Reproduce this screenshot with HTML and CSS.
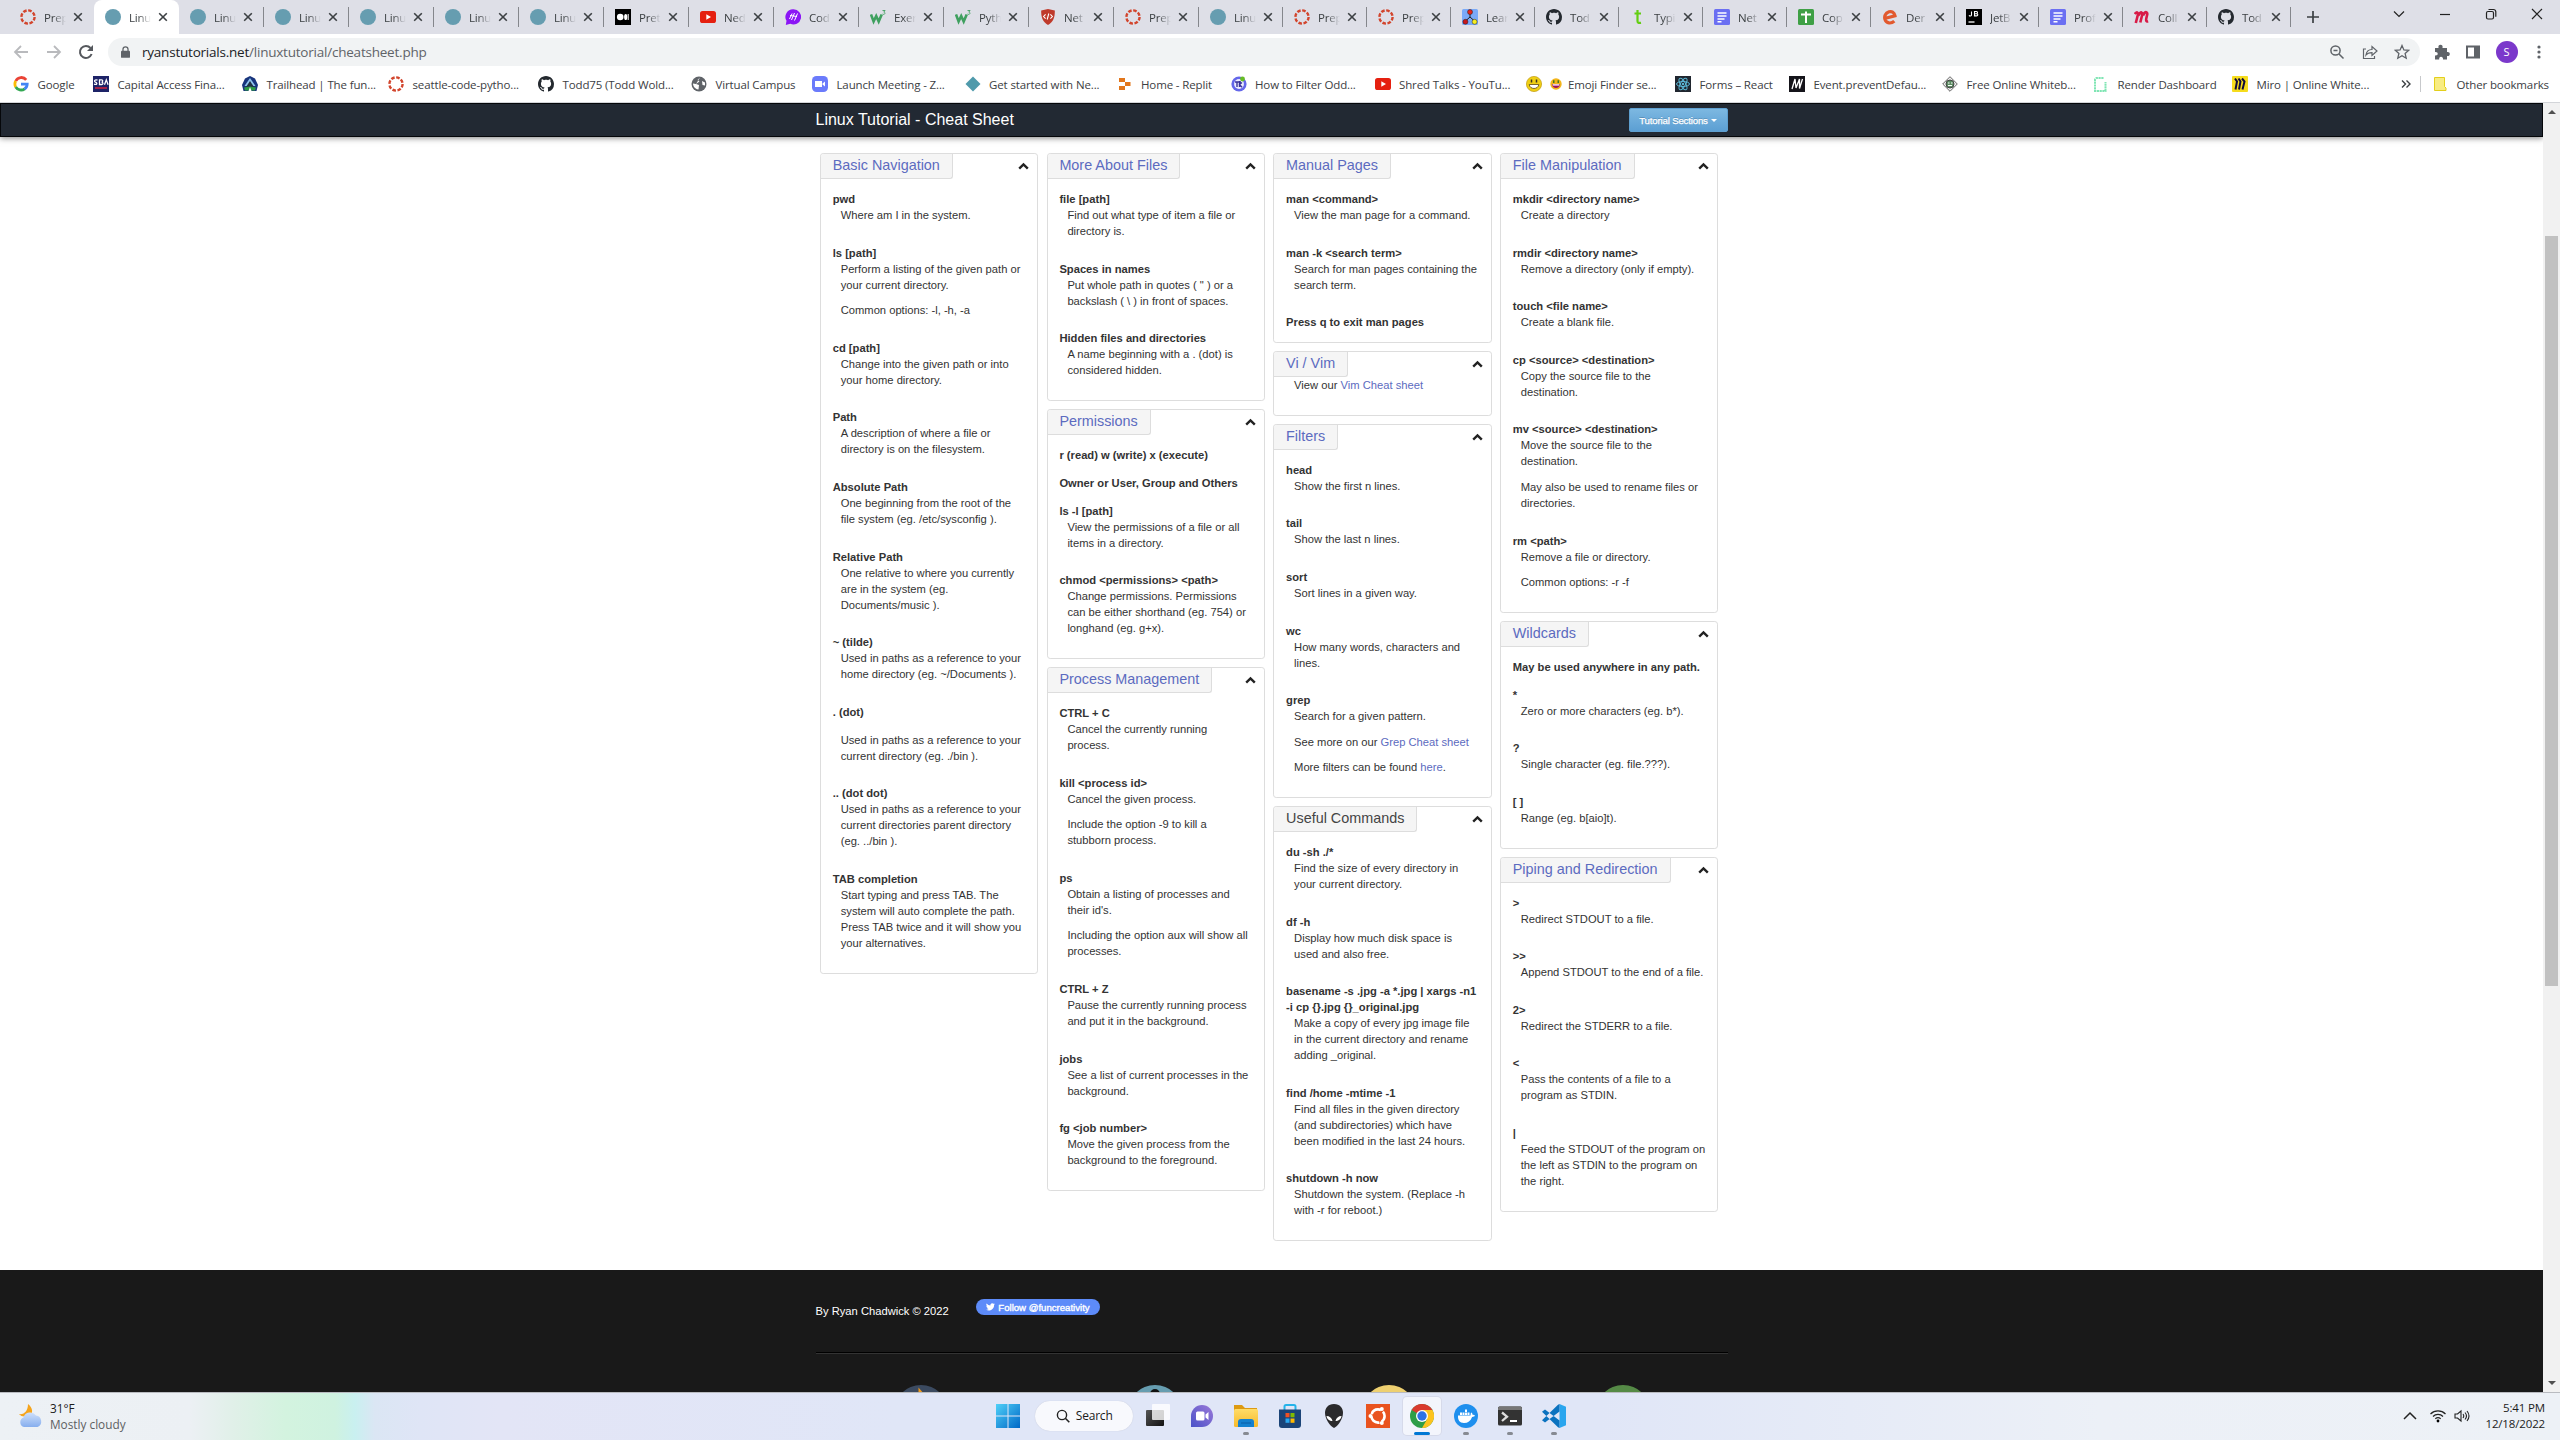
FILE: index.html
```html
<!DOCTYPE html>
<html lang="en">
<head>
<meta charset="utf-8">
<title>Linux Tutorial - Cheat Sheet</title>
<link rel="stylesheet" href="styles.css">
</head>
<body>
<svg class="defs" aria-hidden="true">
  <defs>
    <linearGradient id="g-win" x1="0" y1="0" x2="1" y2="1"><stop offset="0" stop-color="#4fd0f8"/><stop offset="1" stop-color="#0067c6"/></linearGradient>
    <linearGradient id="g-chat" x1="0" y1="1" x2="1" y2="0"><stop offset="0" stop-color="#4a52c8"/><stop offset="1" stop-color="#9a78d8"/></linearGradient>
    <linearGradient id="g-fold" x1="0" y1="0" x2="0" y2="1"><stop offset="0" stop-color="#ffdc68"/><stop offset="1" stop-color="#f7b92a"/></linearGradient>
    <linearGradient id="g-cloud" x1="0" y1="0" x2="0" y2="1"><stop offset="0" stop-color="#cfe0fb"/><stop offset="1" stop-color="#86aeee"/></linearGradient>
    <linearGradient id="g-dark" x1="0" y1="0" x2="1" y2="1"><stop offset="0" stop-color="#555"/><stop offset="1" stop-color="#111"/></linearGradient>
  </defs>
  <symbol id="canvas" viewBox="0 0 16 16"><circle cx="8" cy="8" r="6.6" fill="none" stroke="#d2452d" stroke-width="2.4" stroke-dasharray="3.6 1.58"/></symbol>
  <symbol id="dot" viewBox="0 0 16 16"><circle cx="8" cy="8" r="8" fill="#669db0"/></symbol>
  <symbol id="medium" viewBox="0 0 16 16"><path d="M0 0h16v16H0z"/><circle cx="5.2" cy="8" r="3.3" fill="#fff"/><ellipse cx="10.7" cy="8" rx="1.6" ry="3.1" fill="#fff"/><path d="M13.2 5v6" stroke="#fff"/></symbol>
  <symbol id="yt" viewBox="0 0 16 16"><rect y="2" width="16" height="12" rx="2.6" fill="#e52010"/><path d="M6.3 5.3v5.4L11 8z" fill="#fff"/></symbol>
  <symbol id="code" viewBox="0 0 16 16"><path d="M8.5.3a7.6 7.6 0 1 1-3.2 14.500L.8 16l.7-4.200A7.600 7.600 0 0 1 8.500.3z" fill="#8b15f5"/><path d="M4.500 10l2.600-5.500M6.500 11l3-7M9.500 11.500l3-7M5 6.500l7 1" stroke="#fff" fill="none"/></symbol>
  <symbol id="w3" viewBox="0 0 16 16"><path d="M1 5.500l2.600 7L6.200 7l2.500 5.500 3-7" fill="none" stroke="#3fa05f" stroke-width="2.600"/><path d="M12.500 1.500h2.600l-1.300 1.600c1.500 0 1.500 2.300-.1 2.300l-1.200-.3" fill="none" stroke="#3fa05f" stroke-width=".9"/></symbol>
  <symbol id="shield" viewBox="0 0 16 16"><path d="M8 0l6.800 1.600C15 8 13.500 13 8 16 2.500 13 1 8 1.200 1.600z" fill="#bf3a2b"/><path d="M5.600 5.300L3.600 7.500l2 2.200M10.400 5.300l2 2.200-2 2.200M8.800 4.500l-1.600 6" stroke="#fff" fill="none" stroke-width="1.100"/></symbol>
  <symbol id="lea" viewBox="0 0 16 16"><rect width="16" height="16" rx="1.500" fill="#7aaaf8"/><path d="M8 4v4M3.500 12L8 8l4.500 4" stroke="#222" fill="none"/><circle cx="8" cy="3" r="2.500" fill="#e8251c" stroke="#222" stroke-width=".5"/><circle cx="3.400" cy="12.800" r="2.500" fill="#c8181c" stroke="#222" stroke-width=".5"/><circle cx="12.600" cy="12.800" r="2.500" fill="#f6ee20" stroke="#222" stroke-width=".5"/></symbol>
  <symbol id="github" viewBox="0 0 16 16"><path fill="#24292f" d="M8 0C3.580 0 0 3.580 0 8c0 3.540 2.290 6.530 5.470 7.590.4.070.55-.17.55-.38 0-.19-.01-.82-.01-1.490-2.010.37-2.530-.49-2.690-.94-.09-.23-.48-.94-.82-1.130-.28-.15-.68-.52-.01-.53.63-.01 1.080.58 1.230.82.72 1.210 1.870.87 2.330.66.07-.52.28-.87.51-1.070-1.780-.2-3.640-.89-3.640-3.950 0-.87.31-1.590.82-2.150-.08-.2-.36-1.020.08-2.120 0 0 .67-.21 2.200.82.64-.18 1.320-.27 2-.27s1.360.09 2 .27c1.530-1.040 2.200-.82 2.200-.82.44 1.100.16 1.920.08 2.120.51.56.82 1.270.82 2.150 0 3.070-1.870 3.750-3.650 3.950.29.25.54.73.54 1.480 0 1.070-.01 1.930-.01 2.200 0 .21.15.46.55.38A8.010 8.010 0 0 0 16 8c0-4.420-3.580-8-8-8z"/></symbol>
  <symbol id="tee" viewBox="0 0 16 16"><path d="M7.500 1v11c0 2 1 2.200 3.500 1.800M4.500 4.500h6.500" stroke="#63ce12" stroke-width="2.200" fill="none"/></symbol>
  <symbol id="docs" viewBox="0 0 16 16"><rect width="16" height="16" rx="1.500" fill="#6b6ff2"/><path d="M3.500 4h9M3.500 7h9M3.500 10h7M3.500 12.800h4" stroke="#fff" stroke-width="1.500"/></symbol>
  <symbol id="sheet" viewBox="0 0 16 16"><rect width="16" height="16" rx="1.500" fill="#3fa046"/><path d="M3 5.500h10M8 2.500v11.500" stroke="#fff" stroke-width="2"/></symbol>
  <symbol id="ee" viewBox="0 0 16 16"><path d="M3.500 9.300l9.500-2.400C12.300 3 9.500 2 7 2.800 3.300 4 2 7.600 3 10.600c1.300 4 6.200 4.400 9.300 1.500" fill="none" stroke="#e2592e" stroke-width="3.200"/></symbol>
  <symbol id="jb" viewBox="0 0 16 16"><path d="M0 0h16v16H0z"/><path d="M5.500 2.500v3.600c0 1.200-1.800 1.200-2.500.3M8.500 2.500v4.400h2c1.800 0 1.600-2.100.2-2.200H8.500h2c1.300 0 1.300-2.200 0-2.200z" fill="none" stroke="#fff" stroke-width="1.100"/><path d="M2.500 13h6" stroke="#fff" stroke-width="1.300"/></symbol>
  <symbol id="mm" viewBox="0 0 16 16"><path d="M.8 5C3 2 4.700 3.500 3.300 8l-1.500 6M4.200 6.500C7 1.500 9 3 7.900 7l-1.600 6.500M9 6.500c2.500-5.500 5-3.500 4 0-.9 3.500-1.800 6.500 1.200 6" fill="none" stroke="#d81b47" stroke-width="2.600"/></symbol>
  <symbol id="google" viewBox="0 0 16 16"><path d="M13.200 3.800A6.200 6.200 0 0 0 2.800 5" fill="none" stroke="#ea4335" stroke-width="2.800"/><path d="M2.700 5a6.300 6.300 0 0 0 0 6" fill="none" stroke="#fbbc05" stroke-width="2.800"/><path d="M2.700 11a6.200 6.200 0 0 0 9 1.800" fill="none" stroke="#34a853" stroke-width="2.800"/><path d="M11.500 13A6 6 0 0 0 14.200 8.200H8" fill="none" stroke="#4285f4" stroke-width="2.800"/></symbol>
  <symbol id="sba" viewBox="0 0 16 16"><path d="M0 0h16v16H0z" fill="#1d2367"/><path d="M4.500 4.200C2 3 .5 5.300 2.500 6.200c2.300.8 1.500 3-1.500 1.900M6.500 3.800v4.700h2c2 0 1.800-2.300 0-2.300 1.500 0 1.700-2.400 0-2.400zM11.500 8.800l1.800-5 1.800 5" fill="none" stroke="#fff" stroke-width="1.300"/><path d="M2 12h12" stroke="#d3253c" stroke-width="1.500"/></symbol>
  <symbol id="trail" viewBox="0 0 16 16"><path d="M8 0l5 2.500 3 6.500-1.500 6h-13L0 9l3-6.500z" fill="#18347c"/><path d="M8 2l5.500 8h-11z" fill="#8fc4ee"/><path d="M8 5l4 6H4z" fill="#234"/><path d="M2 11.500l6-1 6 1-1 3H3z" fill="#2f9b43"/><path d="M8 11l1.500 4h-3z" fill="#fff"/></symbol>
  <symbol id="globe" viewBox="0 0 16 16"><circle cx="8" cy="8" r="7.500" fill="#5f6368"/><path d="M9 1.500L6.500 4l2 1.500L5 8l3 1-.500 4.500C3 13 2 9 2 7.500l3 .500M11 5l3 1.500v3L11.500 9z" fill="#fff"/></symbol>
  <symbol id="zoomus" viewBox="0 0 16 16"><rect width="16" height="16" rx="4.500" fill="#6b7bfb"/><path d="M3 5h7v6H3zM10.500 7.500L13 5.500v5l-2.500-2z" fill="#fff"/></symbol>
  <symbol id="diamond" viewBox="0 0 16 16"><path d="M8 .5L15.500 8 8 15.500.5 8z" fill="#4f9aab"/></symbol>
  <symbol id="replit" viewBox="0 0 16 16"><path d="M2 2h6v4H2zM8 6h5.500v4H8zM2 10h6v4H2z" fill="#e2761b"/></symbol>
  <symbol id="filter" viewBox="0 0 16 16"><circle cx="8" cy="8" r="7.600" fill="#6467ea"/><circle cx="8" cy="8" r="4.900" fill="#eef"/><path d="M4 6h6M6 6v5M8.500 5v6M11 6.500L8.500 8.500l2.500 2.800" stroke="#39329a" stroke-width="1.400" fill="none"/><circle cx="11.500" cy="3" r="2.400" fill="#66bd23"/></symbol>
  <symbol id="smile" viewBox="0 0 16 16"><circle cx="8" cy="8" r="7.600" fill="#efcf13" stroke="#c19a10" stroke-width=".7"/><path d="M5.500 3.500v3M10.500 3.500v3" stroke="#3c3420" stroke-width="1.500"/><path d="M3.200 8.500h9.600c-.6 5.300-9 5.300-9.600 0z" fill="#fff" stroke="#5c4710" stroke-width=".8"/></symbol>
  <symbol id="grin" viewBox="0 0 16 16"><circle cx="8" cy="8" r="7.600" fill="#f3b51a"/><path d="M5 3v3.500M11 3v3.500" stroke="#472" stroke-width="2"/><path d="M2.500 8h11c-.5 7-10.500 7-11 0z" fill="#9c1461"/><path d="M3.500 8.300h9v1.800h-9z" fill="#fff"/></symbol>
  <symbol id="react" viewBox="0 0 16 16"><path d="M0 0h16v16H0z" fill="#20262f"/><g fill="none" stroke="#5cb8d6"><ellipse cx="8" cy="8" rx="6.500" ry="2.500"/><ellipse cx="8" cy="8" rx="6.500" ry="2.500" transform="rotate(60 8 8)"/><ellipse cx="8" cy="8" rx="6.500" ry="2.500" transform="rotate(120 8 8)"/></g><circle cx="8" cy="8" r="1.200" fill="#5cb8d6"/></symbol>
  <symbol id="mdn" viewBox="0 0 16 16"><path d="M0 0h16v16H0z" fill="#15141a"/><path d="M3 13L6 3l1 9 3.500-9v9.500l3-9.500" stroke="#fff" stroke-width="1.300" fill="none"/></symbol>
  <symbol id="board" viewBox="0 0 16 16"><path d="M8 .7L15.300 8 8 15.300.7 8z" fill="#eee" stroke="#666"/><circle cx="8" cy="8" r="4" fill="#5b8c62" stroke="#444"/><path d="M6 7h1.500M9 7h1.500M6 9.500h4" stroke="#fff"/></symbol>
  <symbol id="render" viewBox="0 0 16 16"><path d="M10.500 2H3.500L2 3.500v11.500h10.500V6M6 5" fill="none" stroke="#80e5b4" stroke-width="2" stroke-dasharray="2.200 .6"/></symbol>
  <symbol id="miro" viewBox="0 0 16 16"><rect width="16" height="16" rx="1" fill="#f6dc1c"/><path d="M3 2.500l2 3-1.500 8M6.500 2.500l2 3-1.500 8M10 2.500l2.500 3-2 8" stroke="#100a3a" stroke-width="2" fill="none"/></symbol>
  <symbol id="x" viewBox="0 0 10 10"><path d="M1.200 1.200l7.600 7.600M8.800 1.200L1.200 8.800" stroke="#3c4043" stroke-width="1.600"/></symbol>
  <symbol id="up" viewBox="0 0 11 8"><path d="M1.200 6.600L5.500 2.400l4.300 4.200" stroke="#222" stroke-width="2.400" fill="none"/></symbol>
</svg>

<div class="browser">
  <div class="tabs">
    <div class="tab"><svg><use href="#canvas"/></svg><span>Prep</span><svg class="close"><use href="#x"/></svg></div>
    <div class="tab active"><svg><use href="#dot"/></svg><span>Linu</span><svg class="close"><use href="#x"/></svg></div>
    <div class="tab"><svg><use href="#dot"/></svg><span>Linu</span><svg class="close"><use href="#x"/></svg></div>
    <div class="tab"><svg><use href="#dot"/></svg><span>Linu</span><svg class="close"><use href="#x"/></svg></div>
    <div class="tab"><svg><use href="#dot"/></svg><span>Linu</span><svg class="close"><use href="#x"/></svg></div>
    <div class="tab"><svg><use href="#dot"/></svg><span>Linu</span><svg class="close"><use href="#x"/></svg></div>
    <div class="tab"><svg><use href="#dot"/></svg><span>Linu</span><svg class="close"><use href="#x"/></svg></div>
    <div class="tab"><svg><use href="#medium"/></svg><span>Pret</span><svg class="close"><use href="#x"/></svg></div>
    <div class="tab"><svg><use href="#yt"/></svg><span>Ned</span><svg class="close"><use href="#x"/></svg></div>
    <div class="tab"><svg><use href="#code"/></svg><span>Cod</span><svg class="close"><use href="#x"/></svg></div>
    <div class="tab"><svg><use href="#w3"/></svg><span>Exer</span><svg class="close"><use href="#x"/></svg></div>
    <div class="tab"><svg><use href="#w3"/></svg><span>Pyth</span><svg class="close"><use href="#x"/></svg></div>
    <div class="tab"><svg><use href="#shield"/></svg><span>Net</span><svg class="close"><use href="#x"/></svg></div>
    <div class="tab"><svg><use href="#canvas"/></svg><span>Prep</span><svg class="close"><use href="#x"/></svg></div>
    <div class="tab slim"><svg><use href="#dot"/></svg><span>Linu</span><svg class="close"><use href="#x"/></svg></div>
    <div class="tab slim"><svg><use href="#canvas"/></svg><span>Prep</span><svg class="close"><use href="#x"/></svg></div>
    <div class="tab slim"><svg><use href="#canvas"/></svg><span>Prep</span><svg class="close"><use href="#x"/></svg></div>
    <div class="tab slim"><svg><use href="#lea"/></svg><span>Lear</span><svg class="close"><use href="#x"/></svg></div>
    <div class="tab slim"><svg><use href="#github"/></svg><span>Tod</span><svg class="close"><use href="#x"/></svg></div>
    <div class="tab slim"><svg><use href="#tee"/></svg><span>Typi</span><svg class="close"><use href="#x"/></svg></div>
    <div class="tab slim"><svg><use href="#docs"/></svg><span>Net</span><svg class="close"><use href="#x"/></svg></div>
    <div class="tab slim"><svg><use href="#sheet"/></svg><span>Cop</span><svg class="close"><use href="#x"/></svg></div>
    <div class="tab slim"><svg><use href="#ee"/></svg><span>Der</span><svg class="close"><use href="#x"/></svg></div>
    <div class="tab slim"><svg><use href="#jb"/></svg><span>JetB</span><svg class="close"><use href="#x"/></svg></div>
    <div class="tab slim"><svg><use href="#docs"/></svg><span>Prof</span><svg class="close"><use href="#x"/></svg></div>
    <div class="tab slim"><svg><use href="#mm"/></svg><span>Coll</span><svg class="close"><use href="#x"/></svg></div>
    <div class="tab slim"><svg><use href="#github"/></svg><span>Tod</span><svg class="close"><use href="#x"/></svg></div>
    <svg class="plus" viewBox="0 0 12 12"><path d="M6 0v12M0 6h12" stroke="#3c4043" stroke-width="1.700"/></svg>
    <div class="winbtns">
      <svg viewBox="0 0 12 12"><path d="M1 3.500l5 5 5-5" fill="none" stroke="#222" stroke-width="1.200"/></svg>
      <svg viewBox="0 0 12 12"><path d="M1 6.500h10" stroke="#222" stroke-width="1.200"/></svg>
      <svg viewBox="0 0 12 12"><rect x="1.500" y="3.500" width="7" height="7.500" rx="1.500" fill="none" stroke="#222" stroke-width="1.200"/><path d="M3.500 1.500h5a2.300 2.300 0 0 1 2.300 2.300v5" fill="none" stroke="#222" stroke-width="1.200"/></svg>
      <svg viewBox="0 0 12 12"><path d="M1 1l10 10M11 1L1 11" stroke="#222" stroke-width="1.200"/></svg>
    </div>
  </div>

  <div class="toolbar">
    <div class="nav">
      <svg viewBox="0 0 16 16"><path d="M15 8H2M8 2L2 8l6 6" fill="none" stroke="#b9babd" stroke-width="1.800"/></svg>
      <svg viewBox="0 0 16 16"><path d="M1 8h13M8 2l6 6-6 6" fill="none" stroke="#b9babd" stroke-width="1.800"/></svg>
      <svg viewBox="0 0 16 16"><path d="M13.600 10A6 6 0 1 1 12.500 4" fill="none" stroke="#55585d" stroke-width="2"/><path d="M15 1v6H9z" fill="#55585d"/></svg>
    </div>
    <div class="omnibox">
      <svg class="lock" viewBox="0 0 10 13"><rect y="5" width="10" height="8" rx="1" fill="#5f6368"/><path d="M2.200 6V3.500a2.800 2.800 0 0 1 5.600 0V6" fill="none" stroke="#5f6368" stroke-width="1.400"/></svg>
      <span class="url">ryanstutorials.net<i>/linuxtutorial/cheatsheet.php</i></span>
      <div class="omni-icons">
        <svg viewBox="0 0 16 16"><circle cx="6.500" cy="6.500" r="4.600" fill="none" stroke="#5f6368" stroke-width="1.500"/><path d="M10 10l4.500 4.500M4.500 6.500h4" stroke="#5f6368" stroke-width="1.500"/></svg>
        <svg viewBox="0 0 16 16"><path d="M4 5H1.500v9.500h11V12M4 11c.5-4 3-5.500 6-5.500V2.500L15 7l-5 4.500V8.700C7.500 8.700 5.500 9 4 11z" fill="none" stroke="#5f6368" stroke-width="1.200"/></svg>
        <svg viewBox="0 0 16 16"><path d="M8 1.500l1.900 4.400 4.800.4-3.600 3.200 1.100 4.700L8 11.700l-4.200 2.500 1.100-4.700L1.300 6.300l4.800-.4z" fill="none" stroke="#5f6368" stroke-width="1.300"/></svg>
      </div>
    </div>
    <div class="actions">
      <svg viewBox="0 0 16 16"><path d="M1 4h3.500C4 1.500 5 .8 6.500.8S9 1.500 8.500 4H13v4c2-.3 2.800.7 2.800 2S15 12.300 13 12v3.500H9c.2-2-.7-2.800-2-2.800s-2 .8-1.800 2.800H1v-4c2 .2 2.700-.6 2.700-1.700S3 7.800 1 8z" fill="#5f6368"/></svg>
      <svg viewBox="0 0 16 16"><path d="M1 1.500h14v13H1zM3 3.500v9h6v-9z" fill="#5f6368" fill-rule="evenodd"/></svg>
      <span class="avatar">S</span>
      <svg viewBox="0 0 16 16"><g fill="#5f6368"><circle cx="8" cy="3" r="1.600"/><circle cx="8" cy="8" r="1.600"/><circle cx="8" cy="13" r="1.600"/></g></svg>
    </div>
  </div>

  <div class="bookmarks">
    <div style="width:80px"><svg><use href="#google"/></svg>Google</div>
    <div style="width:149px"><svg><use href="#sba"/></svg>Capital Access Fina...</div>
    <div style="width:146px"><svg><use href="#trail"/></svg>Trailhead | The fun...</div>
    <div style="width:150px"><svg><use href="#canvas"/></svg>seattle-code-pytho...</div>
    <div style="width:153px"><svg><use href="#github"/></svg>Todd75 (Todd Wold...</div>
    <div style="width:121px"><svg><use href="#globe"/></svg>Virtual Campus</div>
    <div style="width:152.5px"><svg><use href="#zoomus"/></svg>Launch Meeting - Z...</div>
    <div style="width:152px"><svg><use href="#diamond"/></svg>Get started with Ne...</div>
    <div style="width:114px"><svg><use href="#replit"/></svg>Home - Replit</div>
    <div style="width:144px"><svg><use href="#filter"/></svg>How to Filter Odd...</div>
    <div style="width:151px"><svg><use href="#yt"/></svg>Shred Talks - YouTu...</div>
    <div style="width:149.5px"><svg><use href="#smile"/></svg><svg class="small"><use href="#grin"/></svg>Emoji Finder se...</div>
    <div style="width:114px"><svg><use href="#react"/></svg>Forms – React</div>
    <div style="width:153px"><svg><use href="#mdn"/></svg>Event.preventDefau...</div>
    <div style="width:151px"><svg><use href="#board"/></svg>Free Online Whiteb...</div>
    <div style="width:139px"><svg><use href="#render"/></svg>Render Dashboard</div>
    <div style="width:150px"><svg><use href="#miro"/></svg>Miro | Online White...</div>
    <svg class="more" viewBox="0 0 10 10"><path d="M1 1.500L4.500 5 1 8.500M5.500 1.500L9 5 5.500 8.500" fill="none" stroke="#3c4043" stroke-width="1.400"/></svg>
    <div class="other"><svg viewBox="0 0 16 16"><path d="M2.500 1.500h10v9l1.500 1.500v2.500H2.500z" fill="#f8ec82" stroke="#e3cf1c"/></svg>Other bookmarks</div>
  </div>
</div>

<div class="viewport">
  <div class="page">
    <header class="site-head">
      <div class="container">
        <h1>Linux Tutorial - Cheat Sheet</h1>
        <span class="sections">Tutorial Sections <b class="caret"></b></span>
      </div>
    </header>

    <main class="sheet">
      <div class="col">
        <section class="card">
          <h2><a>Basic Navigation</a><svg><use href="#up"/></svg></h2>
          <dl>
            <dt>pwd</dt><dd><p>Where am I in the system.</p></dd>
            <dt>ls [path]</dt><dd><p>Perform a listing of the given path or your current directory.</p><p>Common options: -l, -h, -a</p></dd>
            <dt>cd [path]</dt><dd><p>Change into the given path or into your home directory.</p></dd>
            <dt>Path</dt><dd><p>A description of where a file or directory is on the filesystem.</p></dd>
            <dt>Absolute Path</dt><dd><p>One beginning from the root of the file system (eg. /etc/sysconfig ).</p></dd>
            <dt>Relative Path</dt><dd><p>One relative to where you currently are in the system (eg. Documents/music ).</p></dd>
            <dt>~ (tilde)</dt><dd><p>Used in paths as a reference to your home directory (eg. ~/Documents ).</p></dd>
            <dt class="apart">. (dot)</dt><dd><p>Used in paths as a reference to your current directory (eg. ./bin ).</p></dd>
            <dt>.. (dot dot)</dt><dd><p>Used in paths as a reference to your current directories parent directory (eg. ../bin ).</p></dd>
            <dt>TAB completion</dt><dd><p>Start typing and press TAB. The system will auto complete the path. Press TAB twice and it will show you your alternatives.</p></dd>
          </dl>
        </section>
      </div>

      <div class="col">
        <section class="card">
          <h2><a>More About Files</a><svg><use href="#up"/></svg></h2>
          <dl>
            <dt>file [path]</dt><dd><p>Find out what type of item a file or directory is.</p></dd>
            <dt>Spaces in names</dt><dd><p>Put whole path in quotes ( " ) or a backslash ( \ ) in front of spaces.</p></dd>
            <dt>Hidden files and directories</dt><dd><p>A name beginning with a . (dot) is considered hidden.</p></dd>
          </dl>
        </section>
        <section class="card">
          <h2><a>Permissions</a><svg><use href="#up"/></svg></h2>
          <dl>
            <dt class="apart">r (read) w (write) x (execute)</dt>
            <dt class="apart">Owner or User, Group and Others</dt>
            <dt>ls -l [path]</dt><dd><p>View the permissions of a file or all items in a directory.</p></dd>
            <dt>chmod &lt;permissions&gt; &lt;path&gt;</dt><dd><p>Change permissions. Permissions can be either shorthand (eg. 754) or longhand (eg. g+x).</p></dd>
          </dl>
        </section>
        <section class="card">
          <h2><a>Process Management</a><svg><use href="#up"/></svg></h2>
          <dl>
            <dt>CTRL + C</dt><dd><p>Cancel the currently running process.</p></dd>
            <dt>kill &lt;process id&gt;</dt><dd><p>Cancel the given process.</p><p>Include the option -9 to kill a stubborn process.</p></dd>
            <dt>ps</dt><dd><p>Obtain a listing of processes and their id's.</p><p>Including the option aux will show all processes.</p></dd>
            <dt>CTRL + Z</dt><dd><p>Pause the currently running process and put it in the background.</p></dd>
            <dt>jobs</dt><dd><p>See a list of current processes in the background.</p></dd>
            <dt>fg &lt;job number&gt;</dt><dd><p>Move the given process from the background to the foreground.</p></dd>
          </dl>
        </section>
      </div>

      <div class="col">
        <section class="card">
          <h2><a>Manual Pages</a><svg><use href="#up"/></svg></h2>
          <dl>
            <dt>man &lt;command&gt;</dt><dd><p>View the man page for a command.</p></dd>
            <dt>man -k &lt;search term&gt;</dt><dd><p>Search for man pages containing the search term.</p></dd>
            <dt class="apart">Press q to exit man pages</dt>
          </dl>
        </section>
        <section class="card">
          <h2><a>Vi / Vim</a><svg><use href="#up"/></svg></h2>
          <dl class="tight"><dd><p>View our <a>Vim Cheat sheet</a></p></dd></dl>
        </section>
        <section class="card">
          <h2><a>Filters</a><svg><use href="#up"/></svg></h2>
          <dl>
            <dt>head</dt><dd><p>Show the first n lines.</p></dd>
            <dt>tail</dt><dd><p>Show the last n lines.</p></dd>
            <dt>sort</dt><dd><p>Sort lines in a given way.</p></dd>
            <dt>wc</dt><dd><p>How many words, characters and lines.</p></dd>
            <dt>grep</dt><dd><p>Search for a given pattern.</p><p>See more on our <a>Grep Cheat sheet</a></p><p>More filters can be found <a>here</a>.</p></dd>
          </dl>
        </section>
        <section class="card">
          <h2><a class="plain">Useful Commands</a><svg><use href="#up"/></svg></h2>
          <dl>
            <dt>du -sh ./*</dt><dd><p>Find the size of every directory in your current directory.</p></dd>
            <dt>df -h</dt><dd><p>Display how much disk space is used and also free.</p></dd>
            <dt>basename -s .jpg -a *.jpg | xargs -n1 -i cp {}.jpg {}_original.jpg</dt><dd><p>Make a copy of every jpg image file in the current directory and rename adding _original.</p></dd>
            <dt>find /home -mtime -1</dt><dd><p>Find all files in the given directory (and subdirectories) which have been modified in the last 24 hours.</p></dd>
            <dt>shutdown -h now</dt><dd><p>Shutdown the system. (Replace -h with -r for reboot.)</p></dd>
          </dl>
        </section>
      </div>

      <div class="col">
        <section class="card">
          <h2><a>File Manipulation</a><svg><use href="#up"/></svg></h2>
          <dl>
            <dt>mkdir &lt;directory name&gt;</dt><dd><p>Create a directory</p></dd>
            <dt>rmdir &lt;directory name&gt;</dt><dd><p>Remove a directory (only if empty).</p></dd>
            <dt>touch &lt;file name&gt;</dt><dd><p>Create a blank file.</p></dd>
            <dt>cp &lt;source&gt; &lt;destination&gt;</dt><dd><p>Copy the source file to the destination.</p></dd>
            <dt>mv &lt;source&gt; &lt;destination&gt;</dt><dd><p>Move the source file to the destination.</p><p>May also be used to rename files or directories.</p></dd>
            <dt>rm &lt;path&gt;</dt><dd><p>Remove a file or directory.</p><p>Common options: -r -f</p></dd>
          </dl>
        </section>
        <section class="card">
          <h2><a>Wildcards</a><svg><use href="#up"/></svg></h2>
          <dl>
            <dt class="apart">May be used anywhere in any path.</dt>
            <dt>*</dt><dd><p>Zero or more characters (eg. b*).</p></dd>
            <dt>?</dt><dd><p>Single character (eg. file.???).</p></dd>
            <dt>[ ]</dt><dd><p>Range (eg. b[aio]t).</p></dd>
          </dl>
        </section>
        <section class="card">
          <h2><a>Piping and Redirection</a><svg><use href="#up"/></svg></h2>
          <dl>
            <dt>&gt;</dt><dd><p>Redirect STDOUT to a file.</p></dd>
            <dt>&gt;&gt;</dt><dd><p>Append STDOUT to the end of a file.</p></dd>
            <dt>2&gt;</dt><dd><p>Redirect the STDERR to a file.</p></dd>
            <dt>&lt;</dt><dd><p>Pass the contents of a file to a program as STDIN.</p></dd>
            <dt>|</dt><dd><p class="wide">Feed the STDOUT of the program on the left as STDIN to the program on the right.</p></dd>
          </dl>
        </section>
      </div>
    </main>

    <footer class="site-foot">
      <div class="container">
        <span class="credit">By Ryan Chadwick © 2022</span>
        <span class="follow"><svg viewBox="0 0 24 20"><path fill="#fff" d="M24 2.400a9.800 9.800 0 0 1-2.800.8A4.900 4.900 0 0 0 23.300.400a9.900 9.900 0 0 1-3.100 1.200 4.900 4.900 0 0 0-8.400 4.500A14 14 0 0 1 1.700.900a4.900 4.900 0 0 0 1.500 6.600 4.900 4.900 0 0 1-2.200-.6 4.900 4.900 0 0 0 3.900 4.900 4.900 4.900 0 0 1-2.200.1 4.900 4.900 0 0 0 4.600 3.400A9.900 9.900 0 0 1 0 17.300a14 14 0 0 0 7.500 2.200c9.100 0 14.300-7.700 14-14.600A10 10 0 0 0 24 2.400z"/></svg>Follow @funcreativity</span>
      </div>
      <hr>
      <div class="topics">
        <svg viewBox="0 0 54 54"><circle cx="27" cy="27" r="27" fill="#3b4a60"/><path d="M24.500 2.500l6 7h-6z" fill="#f09a1c"/></svg>
        <svg viewBox="0 0 54 54"><circle cx="27" cy="27" r="27" fill="#669db0"/><circle cx="27" cy="9" r="5" fill="#111"/></svg>
        <svg viewBox="0 0 54 54"><circle cx="27" cy="27" r="27" fill="#eed070"/></svg>
        <svg viewBox="0 0 54 54"><circle cx="27" cy="27" r="27" fill="#558a46"/></svg>
      </div>
    </footer>
  </div>
  <div class="scroll"><i class="arrow-up"></i><i class="thumb"></i><i class="arrow-down"></i></div>
</div>

<div class="taskbar">
  <div class="weather">
    <svg viewBox="0 0 24 24"><path d="M9 0c5 4 6 10 0 12-4 1-7 .5-9-2 5 1 9-3 9-10z" fill="#f5a41c"/><path d="M5 23a5 5 0 0 1-.5-9.500 7 7 0 0 1 12.500-2 6 6 0 0 1 1.500 11.500z" fill="url(#g-cloud)"/></svg>
    <div><b>31°F</b><span>Mostly cloudy</span></div>
  </div>
  <div class="apps">
    <div class="app"><svg viewBox="0 0 24 24"><path d="M0 0h11.500v11.500H0zM12.500 0H24v11.500H12.500zM0 12.500h11.500V24H0zM12.500 12.500H24V24H12.500z" fill="url(#g-win)"/></svg></div>
    <div class="search"><svg viewBox="0 0 14 14"><circle cx="6" cy="6" r="4.600" fill="none" stroke="#222" stroke-width="1.400"/><path d="M9.300 9.300l4 4" stroke="#222" stroke-width="1.600"/></svg>Search</div>
    <div class="app"><svg viewBox="0 0 24 24"><rect y="6" width="18" height="16" rx="1" fill="url(#g-dark)"/><rect x="6" width="18" height="16" rx="1" fill="#fff" opacity=".8"/></svg></div>
    <div class="app"><svg viewBox="0 0 24 24"><path d="M12 1a11 11 0 1 1 0 22H1V12A11 11 0 0 1 12 1z" fill="url(#g-chat)"/><rect x="6" y="7.500" width="8.500" height="9" rx="1.500" fill="#fff"/><path d="M15.500 10.500l3-2.500v8l-3-2.500z" fill="#fff"/></svg></div>
    <div class="app run"><svg viewBox="0 0 24 24"><path d="M0 1h8l3 3h12v5H0z" fill="#dd9a12"/><rect y="5" width="24" height="18" rx="1.500" fill="url(#g-fold)"/><path d="M4 23v-5q0-3 3-3h10q3 0 3 3v5z" fill="#1380cf"/><path d="M7 19h10" stroke="#0b5da5"/></svg></div>
    <div class="app"><svg viewBox="0 0 24 24"><path d="M6.500 6V2.500q0-1.500 1.500-1.500h8q1.500 0 1.500 1.500V6" fill="none" stroke="#25b3ea" stroke-width="2"/><path d="M1 5.500h22V21q0 3-3 3H4q-3 0-3-3z" fill="#1b4478"/><path d="M7.500 9h4v4.300h-4z" fill="#f25022"/><path d="M12.500 9h4v4.300h-4z" fill="#7fba00"/><path d="M7.500 14.500h4v4.300h-4z" fill="#2aa7ee"/><path d="M12.500 14.500h4v4.300h-4z" fill="#ffb900"/></svg></div>
    <div class="app"><svg viewBox="0 0 24 24"><path d="M12 0c6 0 9 4 9 9 0 6-5 13-9 15C8 22 3 15 3 9c0-5 3-9 9-9z" fill="#2a2a2c"/><path d="M4.500 12c3 0 5.500 2 6 5-3 0-5.500-1.500-6-5zM19.500 12c-3 0-5.500 2-6 5 3 0 5.500-1.500 6-5z" fill="#fff"/></svg></div>
    <div class="app"><svg viewBox="0 0 24 24"><path d="M0 0h24v24H0z" fill="#e9531f"/><circle cx="12" cy="12" r="6.600" fill="none" stroke="#fff" stroke-width="2.600" stroke-dasharray="11.400 2.400" stroke-dashoffset="5"/><g fill="#fff"><circle cx="4.500" cy="12" r="2"/><circle cx="15.800" cy="5" r="2"/><circle cx="15.800" cy="19" r="2"/></g></svg></div>
    <div class="app run current"><svg viewBox="0 0 24 24"><circle cx="12" cy="12" r="12" fill="#2e9e48"/><path d="M12 12L1.600 6A12 12 0 0 1 22.400 6z" fill="#d93a2e"/><path d="M12 6h10.400A12 12 0 0 1 12 24l5.200-9z" fill="#fcc31e"/><circle cx="12" cy="12" r="6" fill="#fff"/><circle cx="12" cy="12" r="4.700" fill="#2d72e6"/></svg></div>
    <div class="app run"><svg viewBox="0 0 24 24"><circle cx="12" cy="12" r="12" fill="#1e8fee"/><path d="M4 11.500h12.500c.3-1.500 0-2.300.8-3 1 .7 1.200 1.500 1.200 2.300 1 0 2 .2 2.500.8-.5 1-1.500 1.400-2.900 1.400C16.500 17 14 19 10 19c-4.500 0-6.300-3-6-7.500zM6 8.500h2V11H6zM8.500 8.500h2V11h-2zM11 8.500h2V11h-2zM13.500 8.500h2V11h-2zM11 5.500h2V8h-2z" fill="#fff"/></svg></div>
    <div class="app run"><svg viewBox="0 0 24 24"><rect y="2.500" width="24" height="19" rx="1.500" fill="#333"/><path d="M0 5q0-2.500 1.500-2.500h21Q24 2.500 24 5v1H0z" fill="#777"/><path d="M4 8.500l5 4.200-5 4.300" fill="none" stroke="#ddd" stroke-width="2.300"/><path d="M12 17h7" stroke="#fff" stroke-width="2"/></svg></div>
    <div class="app run"><svg viewBox="0 0 24 24"><path d="M17.500 0L24 2.800v18.400L17.500 24z" fill="#29a5ee"/><path d="M17.500 0v7.500L3 18.500l-3-2.300L16 .8zM17.500 24v-7.500L3 5.500 0 7.800 16 23.200z" fill="#0b72bf"/></svg></div>
  </div>
  <div class="tray">
    <svg viewBox="0 0 16 16"><path d="M2 11l6-6 6 6" fill="none" stroke="#222" stroke-width="1.500"/></svg>
    <svg viewBox="0 0 16 16"><path d="M.5 6a10.600 10.600 0 0 1 15 0M3 8.500a7 7 0 0 1 10 0M5.300 10.800a4 4 0 0 1 5.400 0" fill="none" stroke="#222" stroke-width="1.200"/><circle cx="8" cy="13" r="1.400"/></svg>
    <svg viewBox="0 0 16 16"><path d="M1 6h2.500L7 3v10L3.500 10H1zM9 6q1.500 2 0 4M11 4.500q3 3.500 0 7M13 3q4 5 0 10" fill="none" stroke="#222" stroke-width="1.100"/></svg>
    <div class="clock">5:41 PM<br>12/18/2022</div>
  </div>
</div>
</body>
</html>
```
FILE: styles.css
```css
* { box-sizing: border-box; }

body {
  margin: 0;
  width: 2560px;
  height: 1440px;
  overflow: hidden;
  display: flex;
  flex-direction: column;
  background: #fff;
  font-family: "Liberation Sans", Arial, sans-serif;
  color: #333;
}

.defs { position: absolute; width: 0; height: 0; }
svg { flex: none; display: block; }

/* ---- browser chrome ---- */
.browser {
  height: 103px;
  flex: none;
  border-bottom: 1px solid #d3d5d9;
  font-family: "Open Sans", "Noto Sans", sans-serif;
  color: #3c4043;
}

.tabs {
  display: flex;
  align-items: center;
  height: 34px;
  padding-left: 9px;
  background: #dedfe7;
}

.tab {
  position: relative;
  display: flex;
  align-items: center;
  width: 85px;
  height: 34px;
  padding-left: 11px;
  font-size: 11.500px;
}
.tab.slim { width: 84px; }
.tab svg { width: 16px; height: 16px; margin-right: 8px; }
.tab span {
  width: 25px;
  flex: none;
  white-space: nowrap;
  letter-spacing: -.2px;
  -webkit-mask-image: linear-gradient(90deg, #000 9px, transparent 22px);
  mask-image: linear-gradient(90deg, #000 9px, transparent 22px);
}
.tab .close { width: 10px; height: 10px; margin: 0 0 0 4px; }
.tab::after {
  content: "";
  position: absolute;
  right: 0;
  top: 7px;
  width: 1px;
  height: 20px;
  background: #85878c;
}
.tab:first-child::after, .tab.active::after { display: none; }
.tab.active { background: #fff; border-radius: 8px 8px 0 0; }

.plus { width: 12px; height: 12px; margin-left: 16px; }

.winbtns { display: flex; gap: 34px; margin-left: auto; padding-right: 17px; margin-top: -6px; }
.winbtns svg { width: 12px; height: 12px; }

.toolbar { display: flex; align-items: center; height: 36px; }
.nav { display: flex; gap: 16.500px; padding-left: 13px; width: 108px; }
.nav svg { width: 16px; height: 16px; }

.omnibox {
  display: flex;
  align-items: center;
  width: 2312px;
  height: 28px;
  padding: 0 10px 0 13px;
  border-radius: 14px;
  background: #f1f3f4;
}
.lock { width: 9px; height: 12px; margin-right: 12px; }
.url { font-size: 13.500px; color: #202124; letter-spacing: -.22px; }
.url i { font-style: normal; color: #5f6368; }
.omni-icons { display: flex; gap: 16.500px; margin-left: auto; }
.omni-icons svg { width: 16px; height: 16px; }

.actions { display: flex; align-items: center; gap: 13.500px; padding-left: 13.500px; }
.actions svg { width: 16px; height: 16px; margin-right: 1.500px; }
.avatar {
  width: 22px;
  height: 22px;
  border-radius: 50%;
  background: #7b38cb;
  color: #fff;
  font-size: 11px;
  line-height: 22px;
  text-align: center;
}

.bookmarks { display: flex; align-items: center; height: 28px; padding-left: 13px; font-size: 11.500px; white-space: nowrap; letter-spacing: -.13px; }
.bookmarks div { display: flex; align-items: center; flex: none; }
.bookmarks div svg { width: 16px; height: 16px; margin-right: 8.500px; }
.bookmarks .small { width: 12px; height: 12px; margin-right: 6px; }
.bookmarks .more { width: 10px; height: 10px; margin-left: 19px; }
.bookmarks .other { margin-left: 9px; padding-left: 11px; border-left: 1px solid #c7c9cc; }

/* ---- page ---- */
.viewport { display: flex; height: 1289px; flex: none; overflow: hidden; }
.page { width: 2543px; height: 1289px; overflow: hidden; }
.container { width: 912px; margin: 0 auto; display: flex; }

.site-head {
  position: relative;
  height: 34px;
  background: #222933;
  border: 1px solid #05070a;
  box-shadow: 0 1px 6px rgba(0, 0, 0, .5);
}
.site-head .container { align-items: center; justify-content: space-between; height: 32px; }
.site-head h1 { margin: 0; font-size: 16px; font-weight: 400; line-height: 16px; color: #fff; }
.sections {
  display: flex;
  align-items: center;
  justify-content: center;
  width: 99px;
  height: 24px;
  border-radius: 2px;
  background: linear-gradient(#7db8e1, #5c9fd3);
  border: 1px solid #5e9fd0;
  font-size: 9.600px;
  letter-spacing: -.15px;
  color: #fff;
  -webkit-text-stroke: .25px #fff;
  text-shadow: 0 -1px 0 rgba(0, 0, 0, .2);
}
.caret { margin-left: 3px; border: 3px solid transparent; border-top-color: #fff; border-bottom: 0; }

.sheet {
  display: flex;
  gap: 8.500px;
  width: 903px;
  height: 1133px;
  margin: 0 auto;
  padding: 16px 4px 0 0;
}
.col { width: 218.200px; flex: none; }

.card {
  margin-bottom: 8px;
  border: 1px solid #ddd;
  border-radius: 3.200px;
  font-size: 11.200px;
  line-height: 16px;
}
.card h2 {
  display: flex;
  justify-content: space-between;
  align-items: flex-start;
  height: 25px;
  margin: 0;
  padding-right: 8px;
  font-size: 14.400px;
  font-weight: 400;
  line-height: 22px;
}
.card h2 a {
  height: 25px;
  padding: 0 12px 0 11.700px;
  background: #f5f5f5;
  border-right: 1px solid #ddd;
  border-bottom: 1px solid #ddd;
  border-radius: 3px 0 3px 0;
}
.card h2 svg { width: 11px; height: 8px; margin-top: 8px; }
.card a { color: #5c6bc0; }
.card a.plain { color: #444; }

dl { margin: 0; padding: 12px 12px 0 11.700px; }
dl.tight { padding-top: 0; }
dt { font-weight: 700; }
dt.apart { margin-bottom: 12px; }
dd { margin: 0 0 0 8px; padding-bottom: 12px; }
dd p { margin: 0 0 9.600px; }
dd p.wide { margin-right: -3px; }

.site-foot { height: 122px; background: #191919; overflow: hidden; }
.site-foot .container { height: 82px; padding-top: 29px; align-items: flex-start; }
.credit { width: 160.500px; padding-top: 4px; font-size: 11.200px; line-height: 16px; color: #fff; }
.follow {
  display: flex;
  align-items: center;
  justify-content: center;
  gap: 3px;
  width: 124px;
  height: 16px;
  border-radius: 8px;
  background: #5d8bf9;
  color: #fff;
  font-size: 9.600px;
  -webkit-text-stroke: .35px #fff;
}
.follow svg { width: 9px; height: 8px; }
.site-foot hr { width: 912px; height: 2px; margin: 0 auto; border: 0; border-top: 1px solid #000; background: #333; }
.topics { display: grid; grid-template-columns: repeat(4, 234px); justify-content: center; justify-items: center; padding-top: 31px; }
.topics svg { width: 54px; height: 54px; }

.scroll { width: 17px; display: flex; flex-direction: column; align-items: center; background: #f1f1f1; }
.arrow-up { margin-top: 7px; border: 4px solid transparent; border-top: 0; border-bottom: 4px solid #505050; }
.thumb { width: 13px; height: 750px; margin-top: 122px; background: #c1c1c1; }
.arrow-down { margin: auto 0 7px; border: 4px solid transparent; border-bottom: 0; border-top: 4px solid #505050; }

/* ---- taskbar ---- */
.taskbar {
  display: grid;
  grid-template-columns: 1fr auto 1fr;
  align-items: center;
  height: 48px;
  padding-bottom: 2px;
  border-top: 1px solid #b9bbc0;
  background: linear-gradient(90deg, #edf1f5 0, #ecf0f4 190px, #e0f0e8 235px, #d3f3df 285px, #cff2e0 335px, #c9f0f0 355px, #dbe6f4 375px, #dfe5f6 420px, #e3e5f6 500px, #e0e6f7 900px, #e0e6f7 1600px, #ecf0f7 2100px, #edf1f6 100%);
  font-family: "Open Sans", "Noto Sans", sans-serif;
  font-size: 12px;
  line-height: 16px;
  color: #1b1b1b;
}
.weather { display: flex; align-items: center; gap: 7px; padding-left: 19px; }
.weather svg { width: 24px; height: 24px; }
.weather b, .weather span { display: block; font-weight: 400; font-size: 11.800px; }
.weather span { color: #5d5f62; }
.apps { display: flex; align-items: center; padding-left: 2px; }
.app {
  position: relative;
  display: flex;
  align-items: center;
  justify-content: center;
  width: 38px;
  height: 38px;
  margin: 0 3px;
  border-radius: 4px;
}
.app svg { width: 24px; height: 24px; }
.app.run::after {
  content: "";
  position: absolute;
  bottom: 0;
  width: 6px;
  height: 3px;
  border-radius: 2px;
  background: #868a92;
}
.app.current { background: #f3f5fc; box-shadow: 0 0 0 1px #d6daea; }
.app.current::after { width: 16px; background: #0078d4; }
.search {
  display: flex;
  align-items: center;
  gap: 6px;
  width: 98px;
  height: 30px;
  margin: 0 3.500px 0 5px;
  padding-left: 21px;
  border-radius: 15px;
  background: #f8f9fd;
  box-shadow: 0 0 1px #b9bed0;
  letter-spacing: -.2px;
}
.search svg { width: 14px; height: 14px; }
.tray { display: flex; align-items: center; justify-content: flex-end; gap: 8px; padding-right: 15px; }
.tray svg { width: 16px; height: 16px; }
.tray svg:first-child { margin-right: 4px; }
.clock { width: 67px; text-align: right; letter-spacing: -.15px; font-size: 11.500px; }
```
